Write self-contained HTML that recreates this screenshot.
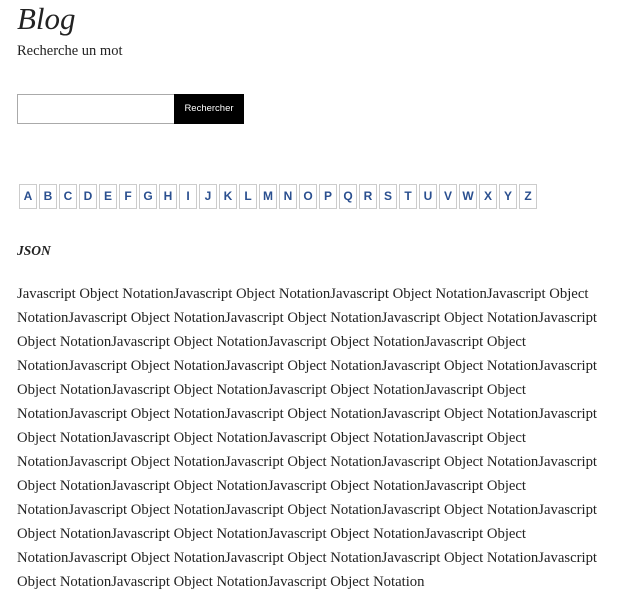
<!DOCTYPE html>
<html><head><meta charset="utf-8"><style>
body{margin:0;background:#fff;font-family:"Liberation Serif",serif;color:#222;}
.t{position:absolute;left:17px;top:1px;font-size:31px;font-style:italic;color:#222;}
.s{position:absolute;left:17px;top:43px;font-size:14.5px;}
.in{position:absolute;left:17px;top:94px;width:156px;height:28px;border:1px solid #aaa;}
.bt{position:absolute;left:174px;top:94px;width:70px;height:30px;background:#000;color:#fff;font-family:"Liberation Sans",sans-serif;font-size:9.5px;line-height:30px;text-align:center;}
.l{position:absolute;top:184px;width:16px;height:23px;border:1px solid #ccc;color:#2a4f8f;font-family:"Liberation Sans",sans-serif;font-size:12px;font-weight:bold;line-height:23px;text-align:center;}
.h{position:absolute;left:17px;top:243px;font-size:13.5px;font-weight:bold;font-style:italic;}
.p{position:absolute;left:17px;top:282px;font-size:14.7px;line-height:24px;white-space:nowrap;}
</style></head><body>
<div class="t">Blog</div>
<div class="s">Recherche un mot</div>
<div class="in"></div><div class="bt">Rechercher</div>
<div class="h">JSON</div>
<div class="p">
Javascript Object NotationJavascript Object NotationJavascript Object NotationJavascript Object<br>
NotationJavascript Object NotationJavascript Object NotationJavascript Object NotationJavascript<br>
Object NotationJavascript Object NotationJavascript Object NotationJavascript Object<br>
NotationJavascript Object NotationJavascript Object NotationJavascript Object NotationJavascript<br>
Object NotationJavascript Object NotationJavascript Object NotationJavascript Object<br>
NotationJavascript Object NotationJavascript Object NotationJavascript Object NotationJavascript<br>
Object NotationJavascript Object NotationJavascript Object NotationJavascript Object<br>
NotationJavascript Object NotationJavascript Object NotationJavascript Object NotationJavascript<br>
Object NotationJavascript Object NotationJavascript Object NotationJavascript Object<br>
NotationJavascript Object NotationJavascript Object NotationJavascript Object NotationJavascript<br>
Object NotationJavascript Object NotationJavascript Object NotationJavascript Object<br>
NotationJavascript Object NotationJavascript Object NotationJavascript Object NotationJavascript<br>
Object NotationJavascript Object NotationJavascript Object Notation
</div>
<div class="l" style="left:19px">A</div><div class="l" style="left:39px">B</div><div class="l" style="left:59px">C</div><div class="l" style="left:79px">D</div><div class="l" style="left:99px">E</div><div class="l" style="left:119px">F</div><div class="l" style="left:139px">G</div><div class="l" style="left:159px">H</div><div class="l" style="left:179px">I</div><div class="l" style="left:199px">J</div><div class="l" style="left:219px">K</div><div class="l" style="left:239px">L</div><div class="l" style="left:259px">M</div><div class="l" style="left:279px">N</div><div class="l" style="left:299px">O</div><div class="l" style="left:319px">P</div><div class="l" style="left:339px">Q</div><div class="l" style="left:359px">R</div><div class="l" style="left:379px">S</div><div class="l" style="left:399px">T</div><div class="l" style="left:419px">U</div><div class="l" style="left:439px">V</div><div class="l" style="left:459px">W</div><div class="l" style="left:479px">X</div><div class="l" style="left:499px">Y</div><div class="l" style="left:519px">Z</div>
</body></html>
